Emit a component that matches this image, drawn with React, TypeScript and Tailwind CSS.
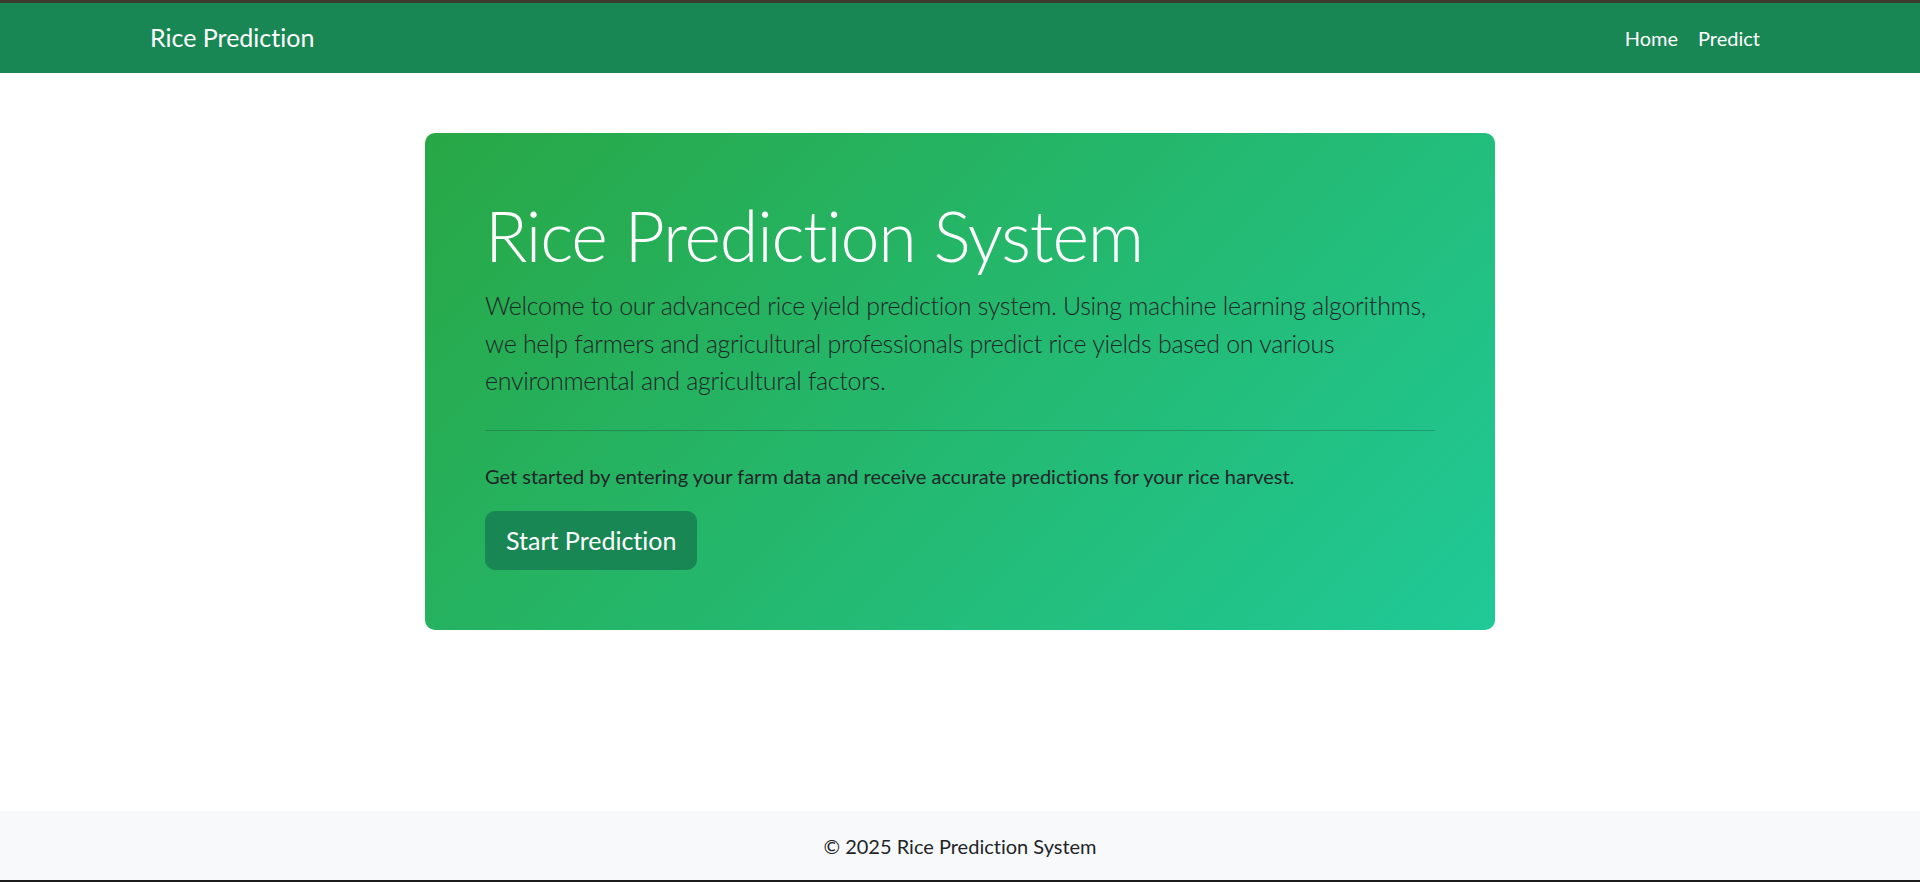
export default function App() {
  return (
    <div className="flex min-h-screen flex-col bg-white font-['Lato',sans-serif] text-[#212529] [font-variant-ligatures:none]">
      <div className="h-[3px] bg-[#3c3b2e]" />

      <nav className="h-[70px] bg-[#198754]">
        <div className="mx-auto flex h-full w-[1620px] items-center justify-between">
          <a className="text-[25px] leading-[1.5] text-white">Rice Prediction</a>
          <ul className="flex items-center">
            <li>
              <a className="block px-[10px] py-[10px] text-[20px] leading-[1.5] text-white">
                Home
              </a>
            </li>
            <li>
              <a className="block px-[10px] py-[10px] text-[20px] leading-[1.5] text-white">
                Predict
              </a>
            </li>
          </ul>
        </div>
      </nav>

      <main className="flex-1 pt-[60px]">
        <div className="mx-auto w-[1070px] rounded-[10px] bg-[linear-gradient(135deg,#28a745,#20c997)] p-[60px]">
          <h1 className="mb-[10px] text-[70px] font-light leading-[1.2] tracking-[-1.2px] text-white">
            Rice Prediction System
          </h1>
          <p className="whitespace-nowrap text-[25px] font-light leading-[1.5] tracking-[-0.3px]">
            Welcome to our advanced rice yield prediction system. Using machine learning algorithms,
            <br />
            we help farmers and agricultural professionals predict rice yields based on various
            <br />
            environmental and agricultural factors.
          </p>
          <hr className="my-[30px] border-t border-[#212529]/25" />
          <p className="mb-[20px] text-[20px] leading-[1.5]">
            Get started by entering your farm data and receive accurate predictions for your rice harvest.
          </p>
          <a className="inline-block rounded-[10px] border border-[#198754] bg-[#198754] px-[20px] py-[10px] text-[25px] leading-[1.5] text-white">
            Start Prediction
          </a>
        </div>
      </main>

      <footer className="flex h-[69px] items-center justify-center bg-[#f8f9fa]">
        <p className="text-[20px] leading-[1.5]">© 2025 Rice Prediction System</p>
      </footer>
      <div className="h-[2px] bg-[#1c1c1c]" />
    </div>
  );
}
